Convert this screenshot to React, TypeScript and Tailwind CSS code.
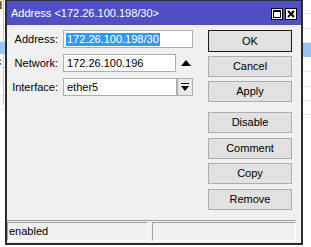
import React from 'react';

const font = { fontFamily: '"Liberation Sans", Arial, sans-serif' };

const WinButton: React.FC<{ label: string; isDefault?: boolean; className?: string }> = ({ label, isDefault, className }) => (
    <button
        className={`w-[84px] h-[21px] bg-[#e1e1e1] text-[11px] text-black leading-none flex items-center justify-center ${
            isDefault ? 'border border-[#1a1a1a]' : 'border border-[#adadad]'
        } ${className ?? ''}`}
    >
        {label}
    </button>
);

const Field: React.FC<{ label: string; children: React.ReactNode }> = ({ label, children }) => (
    <div className="flex items-center h-[18px]">
        <span className="w-[52px] text-right text-[11px] text-black pr-[1px]">{label}</span>
        <div className="ml-[4px] flex items-center">{children}</div>
    </div>
);

const TitleButtons: React.FC = () => (
    <div className="flex gap-[2px] mt-[1px]">
        <div className="w-[12px] h-[12px] bg-white border border-black flex items-center justify-center">
            <div className="w-[8px] h-[8px] border border-black border-t-2" />
        </div>
        <div className="w-[12px] h-[12px] bg-white border border-black flex items-center justify-center">
            <svg width="8" height="8" viewBox="0 0 8 8">
                <path d="M1 1 L7 7 M7 1 L1 7" stroke="black" strokeWidth="2" />
            </svg>
        </div>
    </div>
);

const App: React.FC = () => {
    return (
        <div className="w-[311px] h-[247px] bg-white flex overflow-hidden relative" style={font}>
            {/* window behind, left edge */}
            <div className="w-[5px] h-full flex flex-col relative">
                <div className="h-[12px] text-[11px] leading-[11px] text-black -ml-[4px]">d</div>
                <div className="h-[30px] border-b border-[#e8e8e8]" />
                <div className="h-[12px] bg-[#99c2f0]" />
                <div className="h-[14px] border-b border-[#e8e8e8] text-[11px] leading-[14px] -ml-[4px]">c</div>
                <div className="h-[14px] border-b border-[#e8e8e8]" />
                <div className="h-[14px] border-b border-[#e8e8e8]" />
                <div className="h-[14px] border-b border-[#e8e8e8]" />
                <div className="absolute right-[1px] top-0 h-[105px] w-px bg-[#c8c8c8]" />
            </div>

            {/* dialog */}
            <div className="w-[298px] h-[245px] flex flex-col border-2 border-t border-[#2b2b2b] bg-[#f0f0f0]">
                <div className="h-[24px] bg-[#5050c4] flex items-center justify-between pl-[4px] pr-[4px]">
                    <span className="text-[11px] text-white">Address &lt;172.26.100.198/30&gt;</span>
                    <TitleButtons />
                </div>

                <div className="flex-1 flex pt-[5px]">
                    <div className="flex flex-col gap-[6px]">
                        <Field label="Address:">
                            <div className="w-[130px] h-[18px] bg-white border border-[#abadb3] flex items-center pl-[2px]">
                                <span className="bg-[#3399ff] text-white text-[11px] leading-[13px] px-[1px]">172.26.100.198/30</span>
                            </div>
                        </Field>
                        <Field label="Network:">
                            <div className="w-[113px] h-[18px] bg-white border border-[#abadb3] flex items-center pl-[3px] text-[11px]">
                                172.26.100.196
                            </div>
                            <div className="w-[17px] flex justify-center pl-[3px]">
                                <svg width="10" height="6" viewBox="0 0 10 6">
                                    <path d="M0 6 L5 0 L10 6 Z" fill="black" />
                                </svg>
                            </div>
                        </Field>
                        <Field label="Interface:">
                            <div className="w-[114px] h-[18px] bg-white border border-[#abadb3] flex items-center pl-[3px] text-[11px]">
                                ether5
                            </div>
                            <div className="w-[16px] h-[18px] bg-[#e8e8e8] border border-[#adadad] flex items-center justify-center">
                                <svg width="8" height="9" viewBox="0 0 8 9">
                                    <path d="M0 0.5 H8" stroke="black" strokeWidth="1" />
                                    <path d="M0 3 H8 L4 8 Z" fill="black" />
                                </svg>
                            </div>
                        </Field>
                    </div>

                    <div className="ml-auto mr-[9px] flex flex-col">
                        <WinButton label="OK" isDefault className="h-[22px]" />
                        <WinButton label="Cancel" className="mt-[4px]" />
                        <WinButton label="Apply" className="mt-[4px]" />
                        <WinButton label="Disable" className="mt-[10px]" />
                        <WinButton label="Comment" className="mt-[5px]" />
                        <WinButton label="Copy" className="mt-[4px]" />
                        <WinButton label="Remove" className="mt-[5px]" />
                    </div>
                </div>

                <div className="h-px bg-[#a0a0a0] mr-[5px]" />
                <div className="h-[22px] flex gap-[4px] pt-[1px] pb-[2px] pr-[5px]">
                    <div className="w-[141px] border-l border-t border-[#a0a0a0] border-r border-b border-r-white border-b-white text-[11px] flex items-center pl-[1px]">
                        enabled
                    </div>
                    <div className="flex-1 border-l border-t border-[#a0a0a0] border-r border-b border-r-white border-b-white" />
                </div>
            </div>

            {/* window behind, right edge */}
            <div className="flex-1 h-full flex flex-col">
                <div className="h-[14px] border-b border-[#e5e5e5]" />
                <div className="h-[15px] border-b border-[#e5e5e5]" />
                <div className="h-[14px] border-b border-[#e5e5e5]" />
                <div className="h-[14px] bg-[#99c2f0]" />
                <div className="h-[15px] border-b border-[#e5e5e5]" />
                <div className="h-[15px] border-b border-[#e5e5e5]" />
                <div className="h-[14px] border-b border-[#e5e5e5]" />
                <div className="h-[14px] border-b border-[#e5e5e5]" />
            </div>
        </div>
    );
};

export default App;
